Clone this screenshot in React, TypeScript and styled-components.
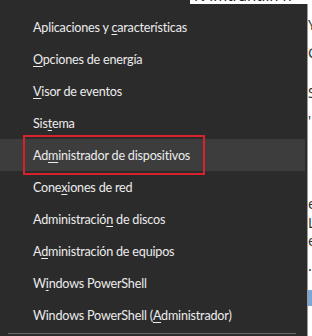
import React from "react";
import styled, { createGlobalStyle } from "styled-components";

const Global = createGlobalStyle`
  html, body { margin: 0; padding: 0; background: #ffffff; }
  body { font-family: "Lato", "Noto Sans", sans-serif; }
`;

const Screen = styled.div`
  width: 312px;
  height: 336px;
  overflow: hidden;
  display: flex;
  flex-direction: column;
  background: #ffffff;
`;

const TopStrip = styled.div`
  height: 4px;
  display: flex;
  flex: none;
  overflow: hidden;
`;

const TopDark = styled.div`
  width: 190px;
  background: #2b2b2b;
`;

const TopText = styled.div`
  flex: 1;
  background: #ffffff;
  color: #222;
  font-size: 15px;
  line-height: 15px;
  margin-top: -12px;
  padding-left: 4px;
  white-space: nowrap;
  font-family: "Noto Sans", sans-serif;
`;

const Body = styled.div`
  display: flex;
  flex: 1;
  min-height: 0;
`;

const Menu = styled.div`
  width: 307px;
  flex: none;
  background: #2b2b2b;
  border-right: 1px solid #9a9a9a;
  padding-top: 7px;
  display: flex;
  flex-direction: column;
`;

const Item = styled.div<{ $active?: boolean }>`
  height: 32px;
  flex: none;
  display: flex;
  align-items: center;
  padding-left: 33px;
  margin-right: 2px;
  background: ${(p) => (p.$active ? "#3d3d3d" : "transparent")};
  color: #ececec;
  font-family: "Lato", "Noto Sans", sans-serif;
  font-size: 12.6px;
  letter-spacing: -0.2px;
  white-space: pre;
  position: relative;
`;

const Label = styled.span`
  white-space: pre;
`;

const U = styled.span`
  text-decoration: underline;
  text-underline-offset: 2px;
  text-decoration-thickness: 1px;
`;

const Outline = styled.div`
  position: absolute;
  left: 23px;
  top: -4px;
  width: 182px;
  height: 40px;
  box-sizing: border-box;
  border: 2px solid #d5222c;
  pointer-events: none;
`;

const Separator = styled.div`
  height: 1px;
  margin: 2px 11px 0 8px;
  background: #6a6a6a;
  flex: none;
`;

const Behind = styled.div`
  flex: 1;
  background: #ffffff;
  display: flex;
  flex-direction: column;
  overflow: hidden;
  color: #333;
  font-size: 14px;
  font-family: "Noto Sans", sans-serif;
`;

const Frag = styled.div<{ $h: number }>`
  height: ${(p) => p.$h}px;
  line-height: ${(p) => p.$h}px;
  flex: none;
  white-space: nowrap;
`;

const BlueBit = styled.div`
  height: 16px;
  width: 6px;
  background: #7aa7d8;
  flex: none;
`;

type Entry = { pre: string; key: string; post: string };

const entries: Entry[] = [
  { pre: "Aplicaciones y ", key: "c", post: "aracterísticas" },
  { pre: "", key: "O", post: "pciones de energía" },
  { pre: "", key: "V", post: "isor de eventos" },
  { pre: "Sis", key: "t", post: "ema" },
  { pre: "Ad", key: "m", post: "inistrador de dispositivos" },
  { pre: "Cone", key: "x", post: "iones de red" },
  { pre: "Administració", key: "n", post: " de discos" },
  { pre: "A", key: "d", post: "ministración de equipos" },
  { pre: "W", key: "i", post: "ndows PowerShell" },
  { pre: "Windows PowerShell (", key: "A", post: "dministrador)" },
];

export default function App() {
  return (
    <>
      <Global />
      <Screen>
        <TopStrip>
          <TopDark />
          <TopText>N imtrantiin n</TopText>
        </TopStrip>
        <Body>
          <Menu>
            {entries.map((e, i) => (
              <Item key={i} $active={i === 4}>
                <Label>
                  {e.pre}
                  <U>{e.key}</U>
                  {e.post}
                </Label>
                {i === 4 && <Outline />}
              </Item>
            ))}
            <Separator />
          </Menu>
          <Behind>
            <Frag $h={12} />
            <Frag $h={18}>Y</Frag>
            <Frag $h={38}>C</Frag>
            <Frag $h={42}>S</Frag>
            <Frag $h={14}>'</Frag>
            <Frag $h={66} />
            <Frag $h={20}>e</Frag>
            <Frag $h={18}>L</Frag>
            <Frag $h={18}>e</Frag>
            <Frag $h={40}>·</Frag>
            <BlueBit />
          </Behind>
        </Body>
      </Screen>
    </>
  );
}
